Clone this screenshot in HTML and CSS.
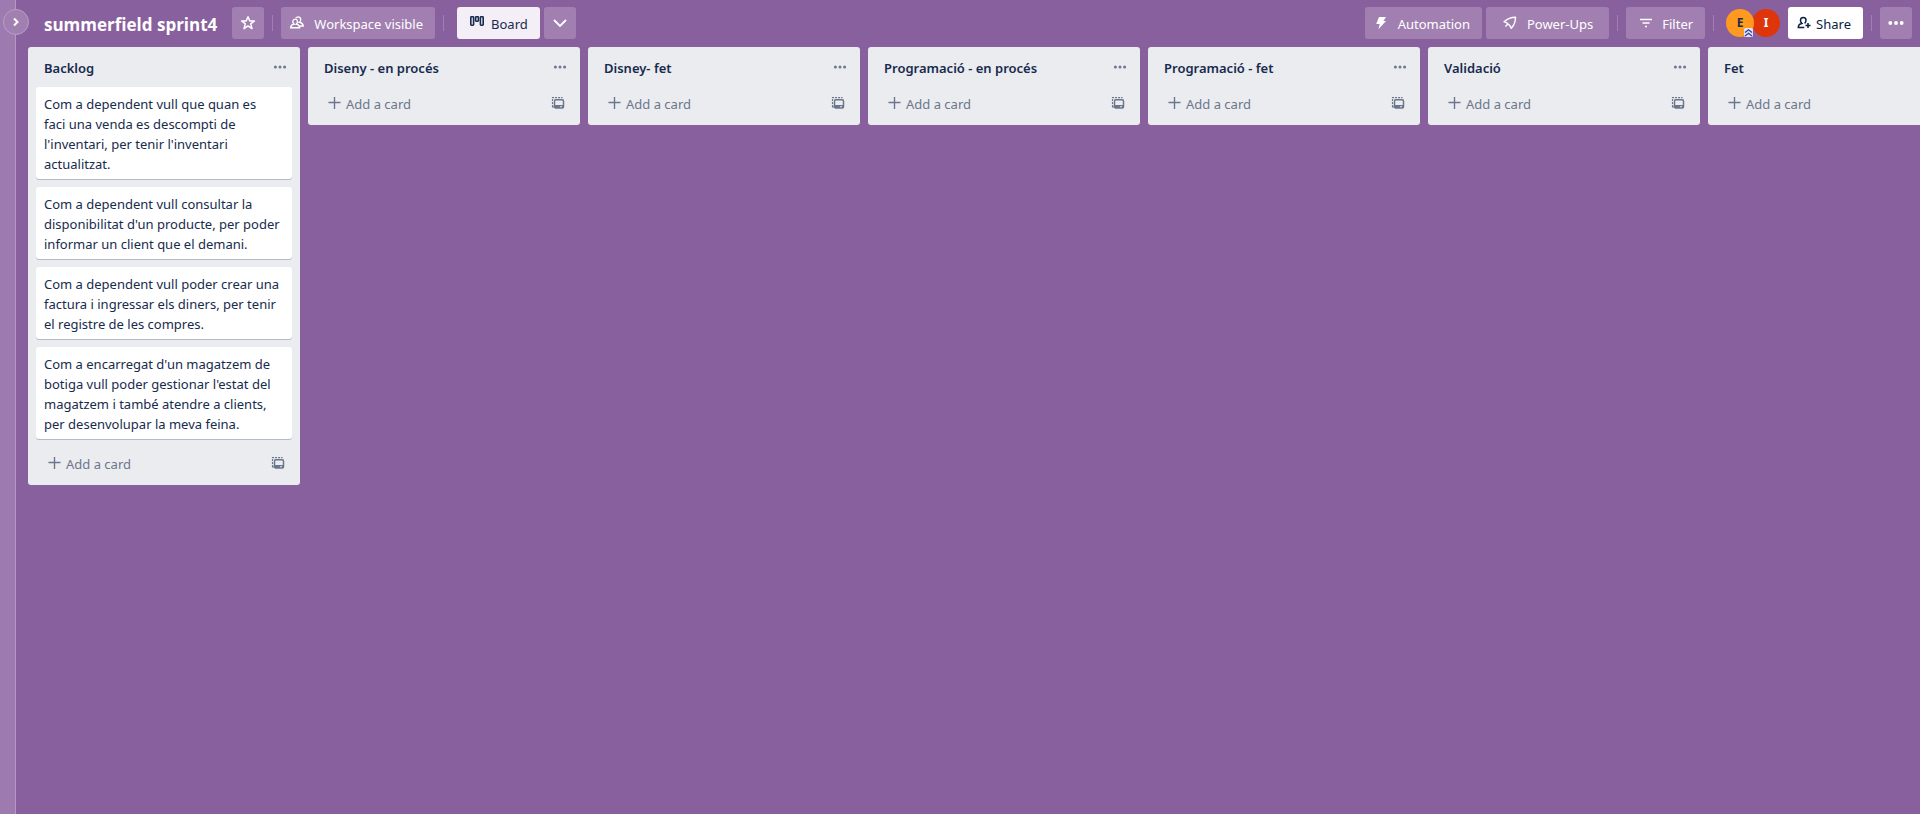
FILE: index.html
```html
<!DOCTYPE html>
<html lang="ca">
<head>
<meta charset="utf-8">
<title>summerfield sprint4</title>
<link rel="stylesheet" href="styles.css">
</head>
<body>
<svg class="sprite" aria-hidden="true">
  <symbol id="plus" viewBox="0 0 14 14"><path d="M7.500 1v12M1.500 6.500h12" fill="none" stroke="currentColor" stroke-width="1.400"/></symbol>
  <symbol id="dots" viewBox="0 0 16 16"><circle cx="3.400" cy="8" r="1.500"/><circle cx="8" cy="8" r="1.500"/><circle cx="12.600" cy="8" r="1.500"/></symbol>
  <symbol id="template" viewBox="0 0 14 14"><path d="M1.500 11V1.600H11.500" fill="none" stroke="currentColor" stroke-width="1.200" stroke-dasharray="2 1"/><path d="M1 11H3" stroke="currentColor" stroke-width="1.200"/><rect x="3.500" y="3.700" width="9" height="8.300" rx="1.200" fill="none" stroke="currentColor" stroke-width="1.500"/><path d="M3.500 9h9v3h-9z"/><path d="M9 10.200h2v1h-2z" fill="#ebecf0"/></symbol>
</svg>
<div class="app">
  <aside class="rail"><button class="rail-toggle" type="button" aria-label="Expand sidebar"><svg width="8" height="10" viewBox="0 0 8 10"><path d="M2 1.500 5.500 5 2 8.500" fill="none" stroke="currentColor" stroke-width="2"/></svg></button></aside>
  <main class="board">
    <header class="bar">
      <h1 class="title">summerfield sprint4</h1>
      <button class="btn square" type="button" aria-label="Star"><svg width="16" height="16" viewBox="0 0 16 16"><path d="M8 1.700 9.800 6h4.600l-3.700 2.900 1.300 4.700L8 10.900l-4 2.700 1.300-4.700L1.600 6h4.600z" fill="none" stroke="currentColor" stroke-width="1.500" stroke-linejoin="round"/></svg></button>
      <span class="divider"></span>
      <button class="btn workspace" type="button"><svg width="16" height="16" viewBox="0 0 16 16"><g fill="none" stroke="currentColor" stroke-width="1.400"><path d="M1.700 12.800c0-2 1.300-3.300 3.200-3.700-.9-.8-1.200-1.800-1-3 .2-1.300 1.100-2 2.300-2s2.100.7 2.300 2c.2 1.200-.2 2.200-1.100 3 2 .4 3.200 1.700 3.200 3.700z"/><path d="M6.800 3.200c.5-.8 1.300-1.300 2.200-1.300 1.600 0 2.700 1.200 2.700 2.800 0 1.100-.4 2-1.200 2.600 2.100.4 3.500 1.700 3.700 3.700h-3.400"/></g></svg><span>Workspace visible</span></button>
      <span class="divider"></span>
      <div class="views">
        <button class="btn view" type="button"><svg width="16" height="16" viewBox="0 0 16 16"><g fill="none" stroke="currentColor" stroke-width="1.600"><rect x="1.800" y="1.800" width="2.800" height="8.400" rx=".6"/><rect x="6.600" y="1.800" width="2.800" height="4.400" rx=".6"/><rect x="11.400" y="1.800" width="2.800" height="8.400" rx=".6"/></g></svg><span>Board</span></button>
        <button class="btn square" type="button" aria-label="More views"><svg width="16" height="16" viewBox="0 0 16 16"><path d="M2 5l6 6 6-6" fill="none" stroke="currentColor" stroke-width="1.800"/></svg></button>
      </div>
      <div class="tools">
        <button class="btn automation" type="button"><svg width="16" height="16" viewBox="0 0 16 16"><path fill="currentColor" d="M6 2h7l-2.600 4H13L5.400 14.200 6.800 9H3.200z"/></svg><span>Automation</span></button>
        <button class="btn power" type="button"><svg width="16" height="16" viewBox="0 0 16 16"><path d="M13.500 2.200C9.500 2.200 5 4 2 6.700l3.200 1.500 2.600 2.400 1.500 2.700C12 10.300 13.600 6 13.500 2.200zM5.800 9 3.500 11.500" fill="none" stroke="currentColor" stroke-width="1.400" stroke-linejoin="round"/></svg><span>Power-Ups</span></button>
        <span class="divider"></span>
        <button class="btn filter" type="button"><svg width="16" height="16" viewBox="0 0 16 16"><path d="M2 4.500h12M4.500 8h7M7 11.500h2" fill="none" stroke="currentColor" stroke-width="1.500"/></svg><span>Filter</span></button>
        <span class="divider"></span>
        <div class="members">
          <button class="avatar orange" type="button">E<svg class="badge" width="9" height="9" viewBox="0 0 9 9"><rect width="9" height="9" rx="1.500" fill="#dfe3f5"/><path d="M1 4.500 4.500 1.800 8 4.500M1 8 4.500 5.300 8 8" fill="none" stroke="#3b3f9c" stroke-width="1.400"/></svg></button>
          <button class="avatar red" type="button">I</button>
        </div>
        <button class="btn share" type="button"><svg width="16" height="16" viewBox="0 0 16 16"><g fill="none" stroke="currentColor" stroke-width="1.500"><path d="M8.300 12.400H2.300c0-2.200 1.500-3.600 3.500-4C4.900 7.600 4.300 6.500 4.500 5c.2-1.500 1.300-2.400 2.700-2.400S9.900 3.500 10 5c.1 1.400-.4 2.500-1.400 3.300"/><path d="M12 8v5M9.500 10.500h5"/></g></svg><span>Share</span></button>
        <span class="divider"></span>
        <button class="btn square" type="button" aria-label="Menu"><svg width="16" height="16" viewBox="0 0 16 16" fill="currentColor"><circle cx="2.300" cy="8" r="1.900"/><circle cx="8" cy="8" r="1.900"/><circle cx="13.700" cy="8" r="1.900"/></svg></button>
      </div>
    </header>
    <div class="lists">
      <section class="list">
        <header class="list-head"><h2>Backlog</h2><button class="icon-btn" type="button" aria-label="List actions"><svg><use href="#dots"/></svg></button></header>
        <a class="card" href="#">Com a dependent vull que quan es<br>faci una venda es descompti de<br>l'inventari, per tenir l'inventari actualitzat.</a>
        <a class="card" href="#">Com a dependent vull consultar la disponibilitat d'un producte, per poder informar un client que el demani.</a>
        <a class="card" href="#">Com a dependent vull poder crear una factura i ingressar els diners, per tenir el registre de les compres.</a>
        <a class="card" href="#">Com a encarregat d'un magatzem de botiga vull poder gestionar l'estat del magatzem i també atendre a clients, per desenvolupar la meva feina.</a>
        <footer class="list-foot"><button class="add" type="button"><svg><use href="#plus"/></svg><span>Add a card</span></button><button class="icon-btn" type="button" aria-label="Create from template"><svg><use href="#template"/></svg></button></footer>
      </section>
      <section class="list">
        <header class="list-head"><h2>Diseny - en procés</h2><button class="icon-btn" type="button" aria-label="List actions"><svg><use href="#dots"/></svg></button></header>
        <footer class="list-foot"><button class="add" type="button"><svg><use href="#plus"/></svg><span>Add a card</span></button><button class="icon-btn" type="button" aria-label="Create from template"><svg><use href="#template"/></svg></button></footer>
      </section>
      <section class="list">
        <header class="list-head"><h2>Disney- fet</h2><button class="icon-btn" type="button" aria-label="List actions"><svg><use href="#dots"/></svg></button></header>
        <footer class="list-foot"><button class="add" type="button"><svg><use href="#plus"/></svg><span>Add a card</span></button><button class="icon-btn" type="button" aria-label="Create from template"><svg><use href="#template"/></svg></button></footer>
      </section>
      <section class="list">
        <header class="list-head"><h2>Programació - en procés</h2><button class="icon-btn" type="button" aria-label="List actions"><svg><use href="#dots"/></svg></button></header>
        <footer class="list-foot"><button class="add" type="button"><svg><use href="#plus"/></svg><span>Add a card</span></button><button class="icon-btn" type="button" aria-label="Create from template"><svg><use href="#template"/></svg></button></footer>
      </section>
      <section class="list">
        <header class="list-head"><h2>Programació - fet</h2><button class="icon-btn" type="button" aria-label="List actions"><svg><use href="#dots"/></svg></button></header>
        <footer class="list-foot"><button class="add" type="button"><svg><use href="#plus"/></svg><span>Add a card</span></button><button class="icon-btn" type="button" aria-label="Create from template"><svg><use href="#template"/></svg></button></footer>
      </section>
      <section class="list">
        <header class="list-head"><h2>Validació</h2><button class="icon-btn" type="button" aria-label="List actions"><svg><use href="#dots"/></svg></button></header>
        <footer class="list-foot"><button class="add" type="button"><svg><use href="#plus"/></svg><span>Add a card</span></button><button class="icon-btn" type="button" aria-label="Create from template"><svg><use href="#template"/></svg></button></footer>
      </section>
      <section class="list">
        <header class="list-head"><h2>Fet</h2><button class="icon-btn" type="button" aria-label="List actions"><svg><use href="#dots"/></svg></button></header>
        <footer class="list-foot"><button class="add" type="button"><svg><use href="#plus"/></svg><span>Add a card</span></button><button class="icon-btn" type="button" aria-label="Create from template"><svg><use href="#template"/></svg></button></footer>
      </section>
    </div>
  </main>
</div>
</body>
</html>
```
FILE: styles.css
```css
* { box-sizing: border-box; }
body {
  margin: 0;
  background: #89609e;
  color: #172b4d;
  font: 13px/20px "Noto Sans", sans-serif;
}
button { margin: 0; padding: 0; border: 0; background: none; font: inherit; color: inherit; cursor: pointer; }
h1, h2 { margin: 0; }
svg { display: block; flex: none; }
.sprite { position: absolute; width: 0; height: 0; }

.app { display: flex; min-height: 100vh; overflow: hidden; }
.rail {
  position: relative;
  flex: none;
  width: 16px;
  background: #9d7aaf;
  border-right: 1px solid #b698c3;
}
.rail-toggle {
  position: absolute;
  top: 9px;
  left: 3px;
  display: flex;
  align-items: center;
  justify-content: center;
  width: 26px;
  height: 26px;
  border: 1px solid #b79fc4;
  border-radius: 50%;
  background: #a180b1;
  color: #fff;
}
.board { flex: 1; min-width: 0; }

.bar { display: flex; align-items: center; gap: 8px; height: 47px; padding: 0 8px 1px 28px; color: #fff; }
.title { margin-right: 7px; padding-top: 3px; font: 700 17px/29px "Open Sans", sans-serif; white-space: nowrap; }
.btn {
  display: flex;
  align-items: center;
  gap: 9px;
  flex: none;
  height: 32px;
  border-radius: 3px;
  background: #a180b1;
  color: #fff;
  white-space: nowrap;
}
.btn span, .add span { padding-top: 2px; }
.square { width: 32px; justify-content: center; }
.divider { flex: none; width: 1px; height: 16px; background: #a180b1; }
.workspace { padding: 0 12px 0 8px; }
.views { display: flex; gap: 4px; margin-left: 5px; }
.view { gap: 6px; padding: 0 12px; background: #f4eef6; color: #172b4d; }
.tools { display: flex; align-items: center; gap: 8px; margin-left: auto; }
.automation { padding: 0 12px 0 8px; margin-right: -4px; }
.power { padding: 0 16px; }
.filter { gap: 8px; padding: 0 12px; }
.members { display: flex; margin-left: 4px; }
.avatar {
  position: relative;
  width: 28px;
  height: 28px;
  border-radius: 50%;
  font-size: 12px;
  font-weight: 700;
}
.avatar + .avatar { margin-left: -2px; }
.orange { z-index: 1; background: #ff991f; color: #172b4d; }
.red { background: #de350b; color: #fff; }
.badge { position: absolute; right: 1px; bottom: 0; }
.share { gap: 4px; padding: 0 12px 0 8px; background: #fff; color: #091e42; }

.lists { display: flex; align-items: flex-start; gap: 8px; padding-left: 12px; }
.list { flex: none; width: 272px; border-radius: 3px; background: #ebecf0; }
.list-head { display: flex; align-items: center; justify-content: space-between; height: 40px; padding: 2px 12px 0 16px; }
.list-head h2 { font-size: 13px; line-height: 20px; font-weight: 600; }
.icon-btn { color: #6b778c; fill: currentColor; }
.icon-btn svg { width: 16px; height: 16px; }
.list-head .icon-btn { padding-bottom: 2px; }
.card {
  display: block;
  margin: 0 8px 8px;
  padding: 7px 8px 5px;
  border-radius: 3px;
  background: #fff;
  box-shadow: 0 1px 0 #b3bac5;
  color: inherit;
  text-decoration: none;
}
.list-foot { display: flex; align-items: center; justify-content: space-between; padding: 2px 15px 8px 19px; }
.list-foot .icon-btn svg { width: 14px; height: 14px; }
.add { display: flex; align-items: center; gap: 5px; height: 28px; color: #6b778c; }
.add svg { width: 14px; height: 14px; }
```
